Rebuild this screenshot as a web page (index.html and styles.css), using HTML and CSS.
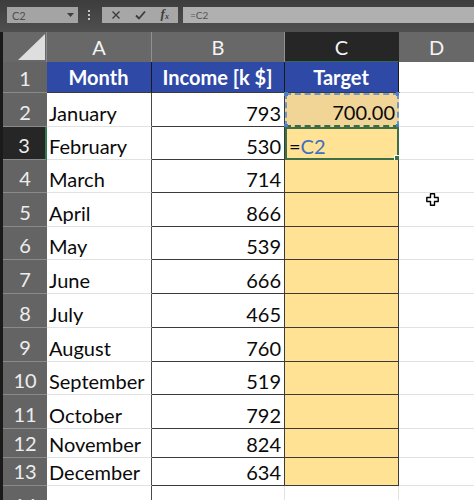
FILE: index.html
```html
<!DOCTYPE html>
<html>
<head>
<meta charset="utf-8">
<link rel="stylesheet" href="styles.css">
</head>
<body>
<div class="toolbar">
  <div class="namebox"><span>C2</span><svg class="caret" width="7" height="4" viewBox="0 0 7 4"><polygon points="0,0 7,0 3.5,4" fill="#3e3e3e"/></svg></div>
  <div class="dots"><i></i><i></i><i></i></div>
  <div class="btns">
    <svg width="10" height="10" viewBox="0 0 10 10"><path d="M1.5 1.5 L8.5 8.5 M8.5 1.5 L1.5 8.5" stroke="#3c3c3c" stroke-width="1.4" fill="none"/></svg>
    <svg width="11" height="10" viewBox="0 0 11 10"><path d="M1 5.5 L4 8.5 L10 1.5" stroke="#3c3c3c" stroke-width="1.8" fill="none"/></svg>
    <span class="fx">f<sub>x</sub></span>
  </div>
  <div class="formula">=C2</div>
</div>
<div class="sheet">
  <div class="corner"><svg width="44" height="30" viewBox="0 0 44 30"><polygon points="15,28 42,2 42,28" fill="#dedede"/></svg></div>
  <div class="ch">A</div>
  <div class="ch">B</div>
  <div class="ch sel">C</div>
  <div class="ch last">D</div>

  <div class="rh">1</div>
  <div class="cell hd">Month</div>
  <div class="cell hd">Income [k $]</div>
  <div class="cell hd">Target</div>
  <div class="cell d"></div>

  <div class="rh">2</div>
  <div class="cell a">January</div>
  <div class="cell b">793</div>
  <div class="cell c ref">700.00<i class="hdl tl"></i><i class="hdl tr"></i><i class="hdl bl"></i><i class="hdl br"></i></div>
  <div class="cell d"></div>

  <div class="rh sel">3</div>
  <div class="cell a">February</div>
  <div class="cell b">530</div>
  <div class="cell c act">=<span class="refc">C2</span><i class="fill"></i></div>
  <div class="cell d"></div>

  <div class="rh">4</div>
  <div class="cell a">March</div>
  <div class="cell b">714</div>
  <div class="cell c"></div>
  <div class="cell d"></div>

  <div class="rh">5</div>
  <div class="cell a">April</div>
  <div class="cell b">866</div>
  <div class="cell c"></div>
  <div class="cell d"></div>

  <div class="rh">6</div>
  <div class="cell a">May</div>
  <div class="cell b">539</div>
  <div class="cell c"></div>
  <div class="cell d"></div>

  <div class="rh">7</div>
  <div class="cell a">June</div>
  <div class="cell b">666</div>
  <div class="cell c"></div>
  <div class="cell d"></div>

  <div class="rh">8</div>
  <div class="cell a">July</div>
  <div class="cell b">465</div>
  <div class="cell c"></div>
  <div class="cell d"></div>

  <div class="rh">9</div>
  <div class="cell a">August</div>
  <div class="cell b">760</div>
  <div class="cell c"></div>
  <div class="cell d"></div>

  <div class="rh">10</div>
  <div class="cell a">September</div>
  <div class="cell b">519</div>
  <div class="cell c"></div>
  <div class="cell d"></div>

  <div class="rh">11</div>
  <div class="cell a">October</div>
  <div class="cell b">792</div>
  <div class="cell c"></div>
  <div class="cell d"></div>

  <div class="rh">12</div>
  <div class="cell a">November</div>
  <div class="cell b">824</div>
  <div class="cell c"></div>
  <div class="cell d"></div>

  <div class="rh">13</div>
  <div class="cell a">December</div>
  <div class="cell b">634</div>
  <div class="cell c"></div>
  <div class="cell d"></div>

  <div class="rh">14</div>
  <div class="cell a"></div>
  <div class="cell e"></div>
  <div class="cell e"></div>
  <div class="cell d"></div>
</div>
<svg class="cursor" width="13" height="13" viewBox="0 0 13 13"><path d="M4.5 0.8 H8.5 V4.5 H12.2 V8.5 H8.5 V12.2 H4.5 V8.5 H0.8 V4.5 H4.5 Z" fill="#fff" stroke="#000" stroke-width="1.4" stroke-linejoin="round"/></svg>
</body>
</html>
```
FILE: styles.css
```css
html, body {
  margin: 0;
  padding: 0;
  width: 474px;
  height: 500px;
  overflow: hidden;
  background: #1a1a1a;
  font-family: Lato, "Open Sans", sans-serif;
}

.toolbar {
  height: 32px;
  box-sizing: border-box;
  padding-top: 7px;
  display: flex;
  align-items: flex-start;
  background: linear-gradient(#3d3d3d, #4f4f4f);
}

.namebox {
  margin-left: 7px;
  width: 71px;
  height: 16px;
  box-sizing: border-box;
  background: #a4a4a4;
  display: flex;
  align-items: center;
  justify-content: space-between;
  padding: 0 4px 0 5px;
  font-size: 11px;
  color: #505050;
}

.dots {
  margin-left: 10px;
  height: 16px;
  width: 2px;
  display: flex;
  flex-direction: column;
  justify-content: center;
  gap: 2px;
}

.dots i {
  display: block;
  width: 2px;
  height: 2px;
  background: #c4c4c4;
}

.btns {
  margin-left: 12px;
  width: 76px;
  height: 16px;
  background: #a7a7a7;
  display: flex;
  align-items: center;
  justify-content: space-around;
  padding: 0 2px;
  box-sizing: border-box;
}

.fx {
  font-family: "Liberation Serif", serif;
  font-style: italic;
  font-weight: bold;
  font-size: 13px;
  color: #3c3c3c;
  line-height: 12px;
}

.fx sub {
  font-size: 8px;
  vertical-align: -1px;
}

.formula {
  margin-left: 5px;
  flex: 1;
  height: 16px;
  background: #b0b0b0;
  font-size: 10px;
  line-height: 16px;
  color: #555;
  padding-left: 7px;
}

.sheet {
  margin-left: 3px;
  display: grid;
  grid-template-columns: 44px 105px 133px 114px 1fr;
  grid-template-rows: 30px 31px 34px 33px 33px 34px 33px 34px 34px 34px 33px 34px 29px 28px 34px;
  background: #fff;
}

.corner {
  background: #686868;
  border-right: 1px solid #8a8a8a;
  box-sizing: border-box;
}

.corner svg {
  display: block;
}

.ch {
  background: #686868;
  color: #f4f4f4;
  font-size: 20px;
  display: flex;
  align-items: center;
  justify-content: center;
  border-right: 1px solid #909090;
  box-sizing: border-box;
}

.ch.sel {
  background: #262626;
  border-right-color: #262626;
  border-bottom: 1px solid #2d6b58;
}

.ch.last {
  border-right: none;
}

.rh {
  background: #646464;
  color: #ededed;
  font-size: 20px;
  line-height: 24px;
  display: flex;
  align-items: flex-end;
  justify-content: center;
  padding-bottom: 2px;
  border-bottom: 1px solid #8a8a8a;
  box-sizing: border-box;
}

.rh.sel {
  background: #262626;
  border-right: 2px solid #2f7a4a;
}

.cell {
  position: relative;
  display: flex;
  align-items: flex-end;
  box-sizing: border-box;
  padding: 0 3px 1px 2px;
  font-size: 20px;
  line-height: 24px;
  color: #0a0a0a;
  background: #fff;
  white-space: nowrap;
}

.hd {
  background: #2f49a7;
  color: #fff;
  font-weight: bold;
  justify-content: center;
  border-right: 1px solid #1a1a1a;
  border-bottom: 1px solid #3a3a3a;
  align-items: center;
  padding-bottom: 0;
}

.a {
  border-right: 1px solid #4a4a4a;
  border-bottom: 1px solid #e2e2e2;
}

.b {
  justify-content: flex-end;
  border-right: 1px solid #3a3a3a;
  border-bottom: 1px solid #3a3a3a;
}

.c {
  background: #ffe294;
  border-right: 1px solid #3a3a3a;
  border-bottom: 1px solid #3a3a3a;
}

.d {
  border-bottom: 1px solid #e2e2e2;
}

.e {
  border-right: 1px solid #e2e2e2;
}

.ref {
  background: #f0d597;
  justify-content: flex-end;
  border: 2px dashed #6f95c8;
  border-bottom: 2px dashed #3d6b45;
  padding-right: 2px;
}

.hdl {
  position: absolute;
  width: 4px;
  height: 4px;
  background: #4f7fc0;
}

.hdl.tl { left: -3px; top: -3px; }
.hdl.tr { right: -3px; top: -3px; }
.hdl.bl { left: -3px; bottom: -3px; }
.hdl.br { right: -3px; bottom: -3px; }

.act {
  border: 2px solid #3e6e45;
  padding-left: 2px;
  padding-bottom: 0;
}

.refc {
  color: #3b6fc3;
}

.fill {
  position: absolute;
  right: -4px;
  bottom: -4px;
  width: 5px;
  height: 5px;
  background: #3e6e45;
  border: 1px solid #fff;
}

.cursor {
  position: absolute;
  left: 426px;
  top: 193px;
}
```
